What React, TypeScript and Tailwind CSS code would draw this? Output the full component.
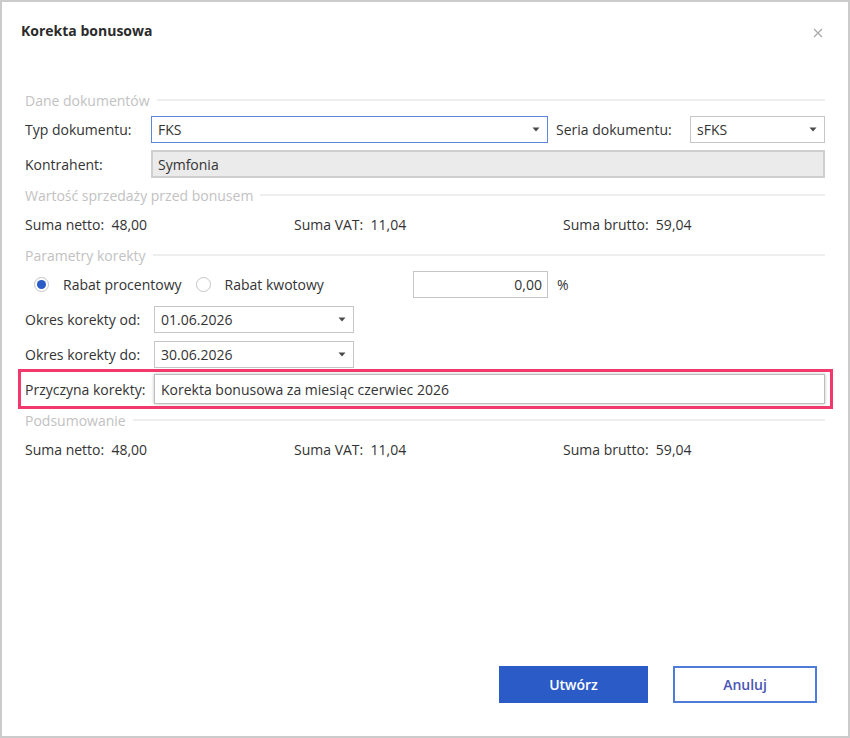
function Arrow() {
  return (
    <svg width="8" height="5" viewBox="0 0 8 5" className="shrink-0">
      <path d="M0.5 0.5 L7.5 0.5 L4 4.5 Z" fill="#4a4a4a" />
    </svg>
  );
}

function SectionHeader({ title, className }: { title: string; className?: string }) {
  return (
    <div className={"flex h-5 items-center gap-[7px] " + (className || "")}>
      <span className="text-[#c2c2c2]">{title}</span>
      <div className="h-[2px] flex-1 bg-[#eeeeee]" />
    </div>
  );
}

function Sums({ className }: { className?: string }) {
  return (
    <div className={"grid h-5 grid-cols-[269px_269px_1fr] items-center " + (className || "")}>
      <span>Suma netto:&nbsp; 48,00</span>
      <span>Suma VAT:&nbsp; 11,04</span>
      <span>Suma brutto:&nbsp; 59,04</span>
    </div>
  );
}

function Radio({ checked, label }: { checked?: boolean; label: string }) {
  return (
    <label className="flex items-center gap-[14px]">
      <span className="flex h-[15px] w-[15px] items-center justify-center rounded-full border border-[#c4c4c4] bg-white">
        {checked && <span className="h-[9px] w-[9px] rounded-full bg-[#2a5bc7]" />}
      </span>
      <span>{label}</span>
    </label>
  );
}

export default function App() {
  return (
    <div
      className="flex h-[738px] w-[850px] flex-col border-2 border-[#cbcbcb] bg-white text-[14px] text-[#333333]"
      style={{ fontFamily: '"Open Sans", "Noto Sans", sans-serif' }}
    >
      <div className="flex items-center justify-between pl-[19px] pr-[25px] pt-[19px]">
        <h1 className="h-5 text-[14px] leading-5 font-bold text-[#2b2b2b]">Korekta bonusowa</h1>
        <svg width="10" height="10" viewBox="0 0 10 10" className="mt-[3px]">
          <path d="M1 1 L9 9 M9 1 L1 9" stroke="#a8a8a8" strokeWidth="1.2" />
        </svg>
      </div>

      <div className="flex flex-col px-[23px]">
        <SectionHeader title="Dane dokumentów" className="mt-[49px]" />

        <div className="mt-[6px] flex h-[27px] items-center">
          <span className="w-[126px]">Typ dokumentu:</span>
          <div className="flex h-full w-[397px] items-center justify-between border border-[#5d86d8] pl-[6px] pr-[7px]">
            <span>FKS</span>
            <Arrow />
          </div>
          <span className="ml-[8px] w-[134px]">Seria dokumentu:</span>
          <div className="flex h-full flex-1 items-center justify-between border border-[#c6c6c6] pl-[6px] pr-[7px]">
            <span>sFKS</span>
            <Arrow />
          </div>
        </div>

        <div className="mt-[7px] flex h-[28px] items-center">
          <span className="w-[126px]">Kontrahent:</span>
          <div className="flex h-full flex-1 items-center border-2 border-[#cfcfcf] bg-[#ebebeb] pl-[5px]">
            <span>Symfonia</span>
          </div>
        </div>

        <SectionHeader title="Wartość sprzedaży przed bonusem" className="mt-[7px]" />
        <Sums className="mt-[9px]" />

        <SectionHeader title="Parametry korekty" className="mt-[11px]" />

        <div className="mt-[6px] flex h-[27px] items-center">
          <div className="ml-[9px] flex w-[379px] items-center gap-[14px]">
            <Radio checked label="Rabat procentowy" />
            <Radio label="Rabat kwotowy" />
          </div>
          <div className="flex h-full w-[135px] items-center justify-end border border-[#c6c6c6] pr-[5px]">
            <span>0,00</span>
          </div>
          <span className="ml-[9px]">%</span>
        </div>

        <div className="mt-[8px] flex h-[27px] items-center">
          <span className="w-[129px]">Okres korekty od:</span>
          <div className="flex h-full w-[200px] items-center justify-between border border-[#c6c6c6] pl-[6px] pr-[7px]">
            <span>01.06.2026</span>
            <Arrow />
          </div>
        </div>

        <div className="mt-[8px] flex h-[27px] items-center">
          <span className="w-[129px]">Okres korekty do:</span>
          <div className="flex h-full w-[200px] items-center justify-between border border-[#c6c6c6] pl-[6px] pr-[7px]">
            <span>30.06.2026</span>
            <Arrow />
          </div>
        </div>

        <div className="mt-[1px] -ml-[7px] -mr-[8px] flex h-[40px] items-center border-[3px] border-[#f2386c] pl-[4px] pr-[5px]">
          <span className="w-[129px]">Przyczyna korekty:</span>
          <div className="flex h-[30px] flex-1 items-center border border-[#bdbdbd] pl-[6px] shadow-[0_0_3px_rgba(0,0,0,0.25)]">
            <span>Korekta bonusowa za miesiąc czerwiec 2026</span>
          </div>
        </div>

        <SectionHeader title="Podsumowanie" className="mt-[1px]" />
        <Sums className="mt-[9px]" />
      </div>

      <div className="mt-auto flex justify-end gap-[25px] pb-[33px] pr-[31px]">
        <button className="h-[37px] w-[149px] bg-[#2a5bc7] text-[14px] font-semibold text-white">
          Utwórz
        </button>
        <button className="h-[37px] w-[144px] border-2 border-[#4f7bd9] bg-white text-[14px] font-semibold text-[#4a55b5]">
          Anuluj
        </button>
      </div>
    </div>
  );
}
